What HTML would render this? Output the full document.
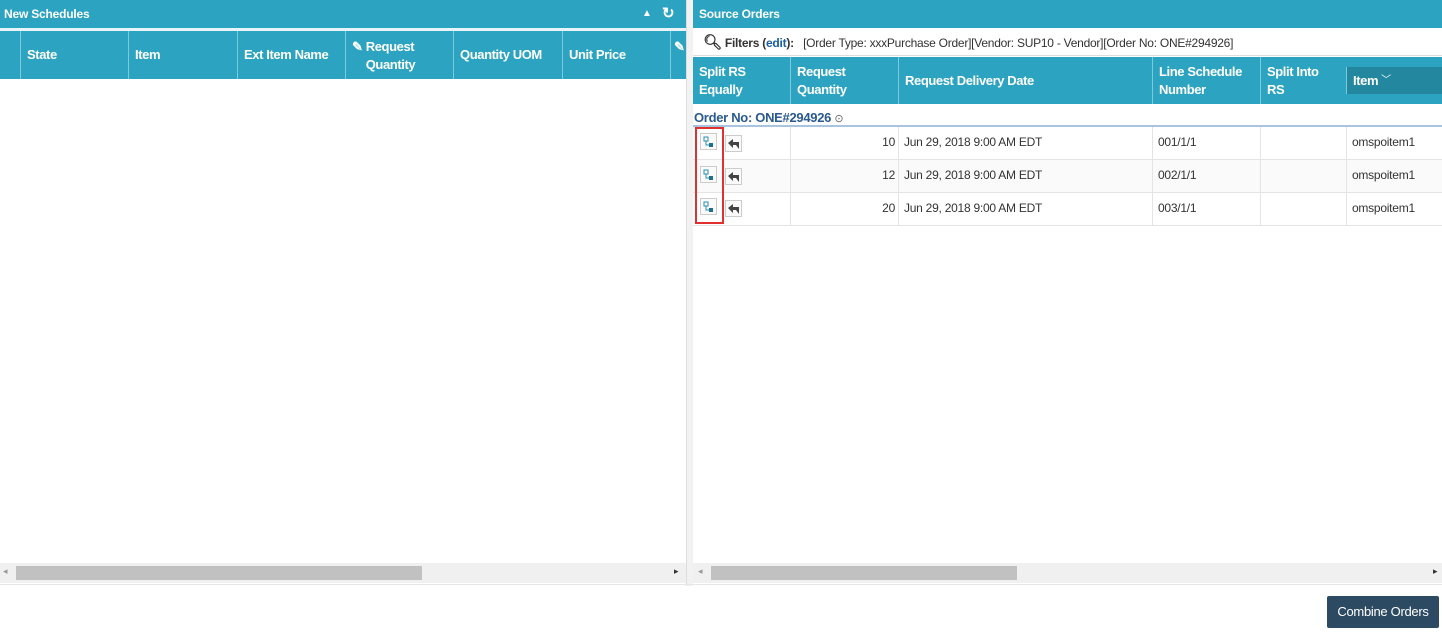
<!DOCTYPE html>
<html><head><meta charset="utf-8"><style>
*{margin:0;padding:0;box-sizing:border-box}
body{width:1442px;height:636px;background:#fff;font-family:"Liberation Sans",sans-serif;font-size:12px;color:#333;position:relative;overflow:hidden}
.abs{position:absolute}
.bar{background:#2ca3c1;color:#fff;font-weight:bold;font-size:12px;height:28px;line-height:28px;padding-left:4px;letter-spacing:-0.2px}
.hdr{background:#2ca3c1;color:#fff;font-weight:bold;font-size:13px;letter-spacing:-0.4px}
.hc{position:absolute;top:0;height:100%;border-left:1px solid #7ccbdc;padding-left:6px;display:flex;align-items:center;line-height:18px}
.row{position:absolute;left:693px;width:749px;height:33px;border-bottom:1px solid #e4e4e4;font-size:12px;letter-spacing:-0.25px}
.c{position:absolute;top:0;height:100%;border-left:1px solid #e4e4e4;display:flex;align-items:center;padding-left:5px;padding-bottom:2px}
.scroll{background:#f0f0f0;height:20px}
.thumb{position:absolute;top:3px;height:14px;background:#c1c1c1}
</style></head><body>
<!-- left -->
<div class="abs bar" style="left:0;top:0;width:686px">New Schedules
<span class="abs" style="left:642px;top:0;font-size:10px">▲</span>
<span class="abs" style="left:662px;top:0;font-size:15px">↻</span></div>
<div class="abs" style="left:0;top:28px;width:686px;height:3px;background:#e8f4f7"></div>
<div class="abs hdr" style="left:0;top:31px;width:686px;height:48px">
<div class="hc" style="left:20px">State</div>
<div class="hc" style="left:128px">Item</div>
<div class="hc" style="left:237px">Ext Item Name</div>
<div class="hc" style="left:345px;align-items:flex-start;padding-top:7px">✎&nbsp;<span>Request<br>Quantity</span></div>
<div class="hc" style="left:453px">Quantity UOM</div>
<div class="hc" style="left:562px">Unit Price</div>
<div class="hc" style="left:670px;align-items:flex-start;padding-top:7px;padding-left:3px">✎</div>
</div>
<div class="abs" style="left:686px;top:0;width:7px;height:586px;background:#f2f2f2;border-left:1px solid #ddd"></div>
<div class="abs scroll" style="left:0;top:563px;width:686px"><div class="thumb" style="left:16px;width:406px"></div>
<span class="abs" style="left:3px;top:3px;font-size:9px;color:#999">◂</span><span class="abs" style="left:674px;top:3px;font-size:9px;color:#333">▸</span></div>
<!-- right -->
<div class="abs bar" style="left:693px;top:0;width:749px;padding-left:6px">Source Orders</div>
<div class="abs" style="left:693px;top:29px;width:749px;height:27px;line-height:27px;padding-left:10px;font-size:12px;letter-spacing:-0.25px;border-bottom:1px solid #ddd">
<b style="font-size:15px">&#x1F50D;&#xFE0E;</b> <b>Filters (<span style="color:#1a5fa0">edit</span>):</b>&nbsp;&nbsp; [Order Type: xxxPurchase Order][Vendor: SUP10 - Vendor][Order No: ONE#294926]</div>
<div class="abs hdr" style="left:693px;top:57px;width:749px;height:47px">
<div class="hc" style="left:0;border-left:0">Split RS<br>Equally</div>
<div class="hc" style="left:97px">Request<br>Quantity</div>
<div class="hc" style="left:205px">Request Delivery Date</div>
<div class="hc" style="left:459px">Line Schedule<br>Number</div>
<div class="hc" style="left:567px">Split Into<br>RS</div>
<div class="hc" style="left:653px;top:10px;height:27px;width:96px;background:#23879f">Item <span style="font-weight:normal;font-size:10px;margin-left:3px">﹀</span></div>
</div>
<div class="abs" style="left:693px;top:104px;width:749px;height:23px;line-height:28px;padding-left:1px;color:#2a5a8f;font-weight:bold;font-size:13px;letter-spacing:-0.3px;border-bottom:2px solid #a8c4e0">Order No: ONE#294926 <span style="font-weight:normal;font-size:11px;color:#666">⊙</span></div>
<div class="row" style="top:127px"><div class="c" style="left:97px;width:108px;justify-content:flex-end;padding-right:3px">10</div><div class="c" style="left:205px">Jun 29, 2018 9:00 AM EDT</div><div class="c" style="left:459px">001/1/1</div><div class="c" style="left:567px"></div><div class="c" style="left:653px">omspoitem1</div></div>
<div class="row" style="top:160px;background:#fafafa"><div class="c" style="left:97px;width:108px;justify-content:flex-end;padding-right:3px">12</div><div class="c" style="left:205px">Jun 29, 2018 9:00 AM EDT</div><div class="c" style="left:459px">002/1/1</div><div class="c" style="left:567px"></div><div class="c" style="left:653px">omspoitem1</div></div>
<div class="row" style="top:193px"><div class="c" style="left:97px;width:108px;justify-content:flex-end;padding-right:3px">20</div><div class="c" style="left:205px">Jun 29, 2018 9:00 AM EDT</div><div class="c" style="left:459px">003/1/1</div><div class="c" style="left:567px"></div><div class="c" style="left:653px">omspoitem1</div></div>
<!-- icons -->
<div class="abs" style="left:695px;top:127px;width:29px;height:97px;border:2px solid #e03030"></div>
<svg class="abs" style="left:700px;top:133px" width="17" height="17"><rect x=".5" y=".5" width="16" height="16" fill="#fafafa" stroke="#ccc"/><rect x="4" y="4" width="4" height="4" fill="none" stroke="#2a8fb0"/><path d="M6 8v4h3" stroke="#2a8fb0" fill="none"/><rect x="9" y="10" width="4" height="4" fill="#1b6f90"/></svg>
<svg class="abs" style="left:700px;top:166px" width="17" height="17"><rect x=".5" y=".5" width="16" height="16" fill="#fafafa" stroke="#ccc"/><rect x="4" y="4" width="4" height="4" fill="none" stroke="#2a8fb0"/><path d="M6 8v4h3" stroke="#2a8fb0" fill="none"/><rect x="9" y="10" width="4" height="4" fill="#1b6f90"/></svg>
<svg class="abs" style="left:700px;top:198px" width="17" height="17"><rect x=".5" y=".5" width="16" height="16" fill="#fafafa" stroke="#ccc"/><rect x="4" y="4" width="4" height="4" fill="none" stroke="#2a8fb0"/><path d="M6 8v4h3" stroke="#2a8fb0" fill="none"/><rect x="9" y="10" width="4" height="4" fill="#1b6f90"/></svg>
<svg class="abs" style="left:725px;top:135px" width="17" height="17"><rect x=".5" y=".5" width="16" height="16" fill="#fafafa" stroke="#ccc"/><path d="M3 8l5-4v3h6v7l-3-4H8v3z" fill="#444"/></svg>
<svg class="abs" style="left:725px;top:168px" width="17" height="17"><rect x=".5" y=".5" width="16" height="16" fill="#fafafa" stroke="#ccc"/><path d="M3 8l5-4v3h6v7l-3-4H8v3z" fill="#444"/></svg>
<svg class="abs" style="left:725px;top:200px" width="17" height="17"><rect x=".5" y=".5" width="16" height="16" fill="#fafafa" stroke="#ccc"/><path d="M3 8l5-4v3h6v7l-3-4H8v3z" fill="#444"/></svg>
<div class="abs scroll" style="left:693px;top:563px;width:749px"><div class="thumb" style="left:18px;width:306px"></div>
<span class="abs" style="left:5px;top:3px;font-size:9px;color:#999">◂</span><span class="abs" style="left:740px;top:3px;font-size:9px;color:#333">▸</span></div>
<div class="abs" style="left:0;top:584px;width:1442px;height:1px;background:#e6e6e6"></div>
<div class="abs" style="left:1327px;top:596px;width:112px;height:32px;background:#2d4a63;color:#fff;font-size:13px;line-height:32px;text-align:center;border-radius:2px;letter-spacing:-0.3px">Combine Orders</div>
</body></html>
